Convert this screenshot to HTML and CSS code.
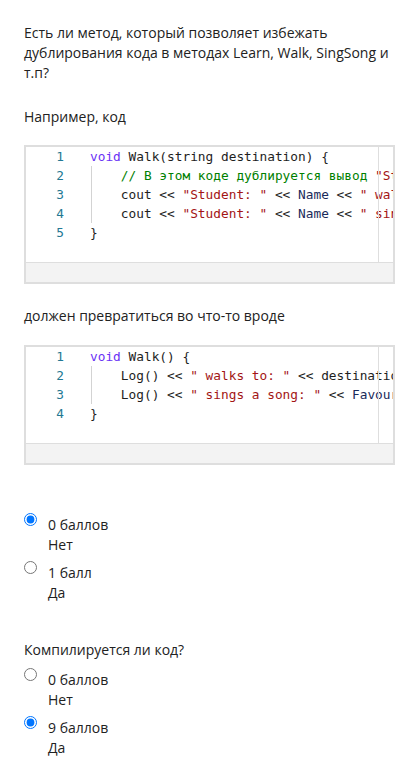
FILE: index.html
```html
<!DOCTYPE html>
<html lang="ru">
<head>
<meta charset="utf-8">
<link rel="stylesheet" href="styles.css">
</head>
<body>
<main class="page">
  <section class="question q1">
    <p class="para first">Есть ли метод, который позволяет избежать дублирования кода в методах Learn, Walk, SingSong и т.п?</p>
    <p class="para p-example">Например, код</p>
    <div class="editor e1">
      <div class="editor-main">
        <div class="lines">
          <div class="row"><span class="ln">1</span><span class="code"><span class="kw">void</span> Walk(string destination) {</span></div>
          <div class="row"><span class="ln">2</span><span class="code"><span class="ind"></span><span class="cm">// В этом коде дублируется вывод </span><span class="st">"Student: "</span> &lt;&lt; Name</span></div>
          <div class="row"><span class="ln">3</span><span class="code"><span class="ind"></span>cout &lt;&lt; <span class="st">"Student: "</span> &lt;&lt; <span class="id">Name</span> &lt;&lt; <span class="st">" walks to: "</span> &lt;&lt; destination &lt;&lt; endl;</span></div>
          <div class="row"><span class="ln">4</span><span class="code"><span class="ind"></span>cout &lt;&lt; <span class="st">"Student: "</span> &lt;&lt; <span class="id">Name</span> &lt;&lt; <span class="st">" sings a song: "</span> &lt;&lt; FavouriteSong &lt;&lt; endl;</span></div>
          <div class="row"><span class="ln">5</span><span class="code">}</span></div>
        </div>
        <div class="vline"></div>
      </div>
      <div class="hscroll"></div>
    </div>
    <p class="para p-then">должен превратиться во что-то вроде</p>
    <div class="editor e2">
      <div class="editor-main">
        <div class="lines">
          <div class="row"><span class="ln">1</span><span class="code"><span class="kw">void</span> Walk() {</span></div>
          <div class="row"><span class="ln">2</span><span class="code"><span class="ind"></span>Log() &lt;&lt; <span class="st">" walks to: "</span> &lt;&lt; destination &lt;&lt; endl;</span></div>
          <div class="row"><span class="ln">3</span><span class="code"><span class="ind"></span>Log() &lt;&lt; <span class="st">" sings a song: "</span> &lt;&lt; <span class="id">FavouriteSong</span> &lt;&lt; endl;</span></div>
          <div class="row"><span class="ln">4</span><span class="code">}</span></div>
        </div>
        <div class="vline"></div>
      </div>
      <div class="hscroll"></div>
    </div>
    <div class="options opts1">
      <label class="opt"><input type="radio" name="a1" checked><span class="opt-text"><span class="pts">0 баллов</span><span class="ans">Нет</span></span></label>
      <label class="opt"><input type="radio" name="a1"><span class="opt-text"><span class="pts">1 балл</span><span class="ans">Да</span></span></label>
    </div>
  </section>
  <section class="question q2">
    <p class="para q2-title">Компилируется ли код?</p>
    <div class="options opts2">
      <label class="opt"><input type="radio" name="a2"><span class="opt-text"><span class="pts">0 баллов</span><span class="ans">Нет</span></span></label>
      <label class="opt"><input type="radio" name="a2" checked><span class="opt-text"><span class="pts">9 баллов</span><span class="ans">Да</span></span></label>
    </div>
  </section>
</main>
</body>
</html>
```
FILE: styles.css
```css
* { box-sizing: border-box; }
html, body { margin: 0; padding: 0; background: #fff; }
body {
  font-family: "Open Sans", "Noto Sans", sans-serif;
  font-size: 14px;
  line-height: 20px;
  color: #222;
}
.page { padding: 23px 24px 0 24px; }
.para { margin: 0; }
.p-example { margin-top: 24px; }
.editor {
  border: 2px solid #dedede;
  background: #fff;
  margin-top: 18px;
}
.p-then { margin-top: 22px; }
.e2 { margin-top: 19px; }
.editor-main { position: relative; }
.lines {
  overflow: hidden;
  padding-bottom: 20px;
  font-family: "DejaVu Sans Mono", "Liberation Mono", monospace;
  font-size: 12.8px;
  line-height: 19px;
  color: #1e1e1e;
}
.row { display: flex; height: 19px; }
.ln {
  flex: none;
  width: 38px;
  text-align: right;
  color: #237893;
}
.code { padding-left: 26px; flex: none; white-space: pre; }
.ind {
  display: inline-block;
  width: 4ch;
  height: 19px;
  vertical-align: top;
  background: linear-gradient(#d3d3d3, #d3d3d3) no-repeat 1px 0 / 1px 100%;
}
.kw { color: #6a32f5; }
.cm { color: #008000; }
.st { color: #a31515; }
.id { color: #1a2a5a; }
.vline {
  position: absolute;
  top: 0;
  bottom: 0;
  right: 14px;
  width: 1px;
  background: #dedede;
}
.hscroll {
  height: 20px;
  border-top: 1px solid #dedede;
  background: #f3f3f3;
}
.options { display: flex; flex-direction: column; gap: 6px; }
.opts1 { margin-top: 48px; }
.opt { display: flex; align-items: flex-start; gap: 11px; }
.opt input {
  margin: 0;
  width: 13px;
  height: 13px;
  flex: none;
}
.opt-text { display: flex; flex-direction: column; margin-top: 2px; }
.q2 { margin-top: 37px; }
.opts2 { margin-top: 8px; }
```
